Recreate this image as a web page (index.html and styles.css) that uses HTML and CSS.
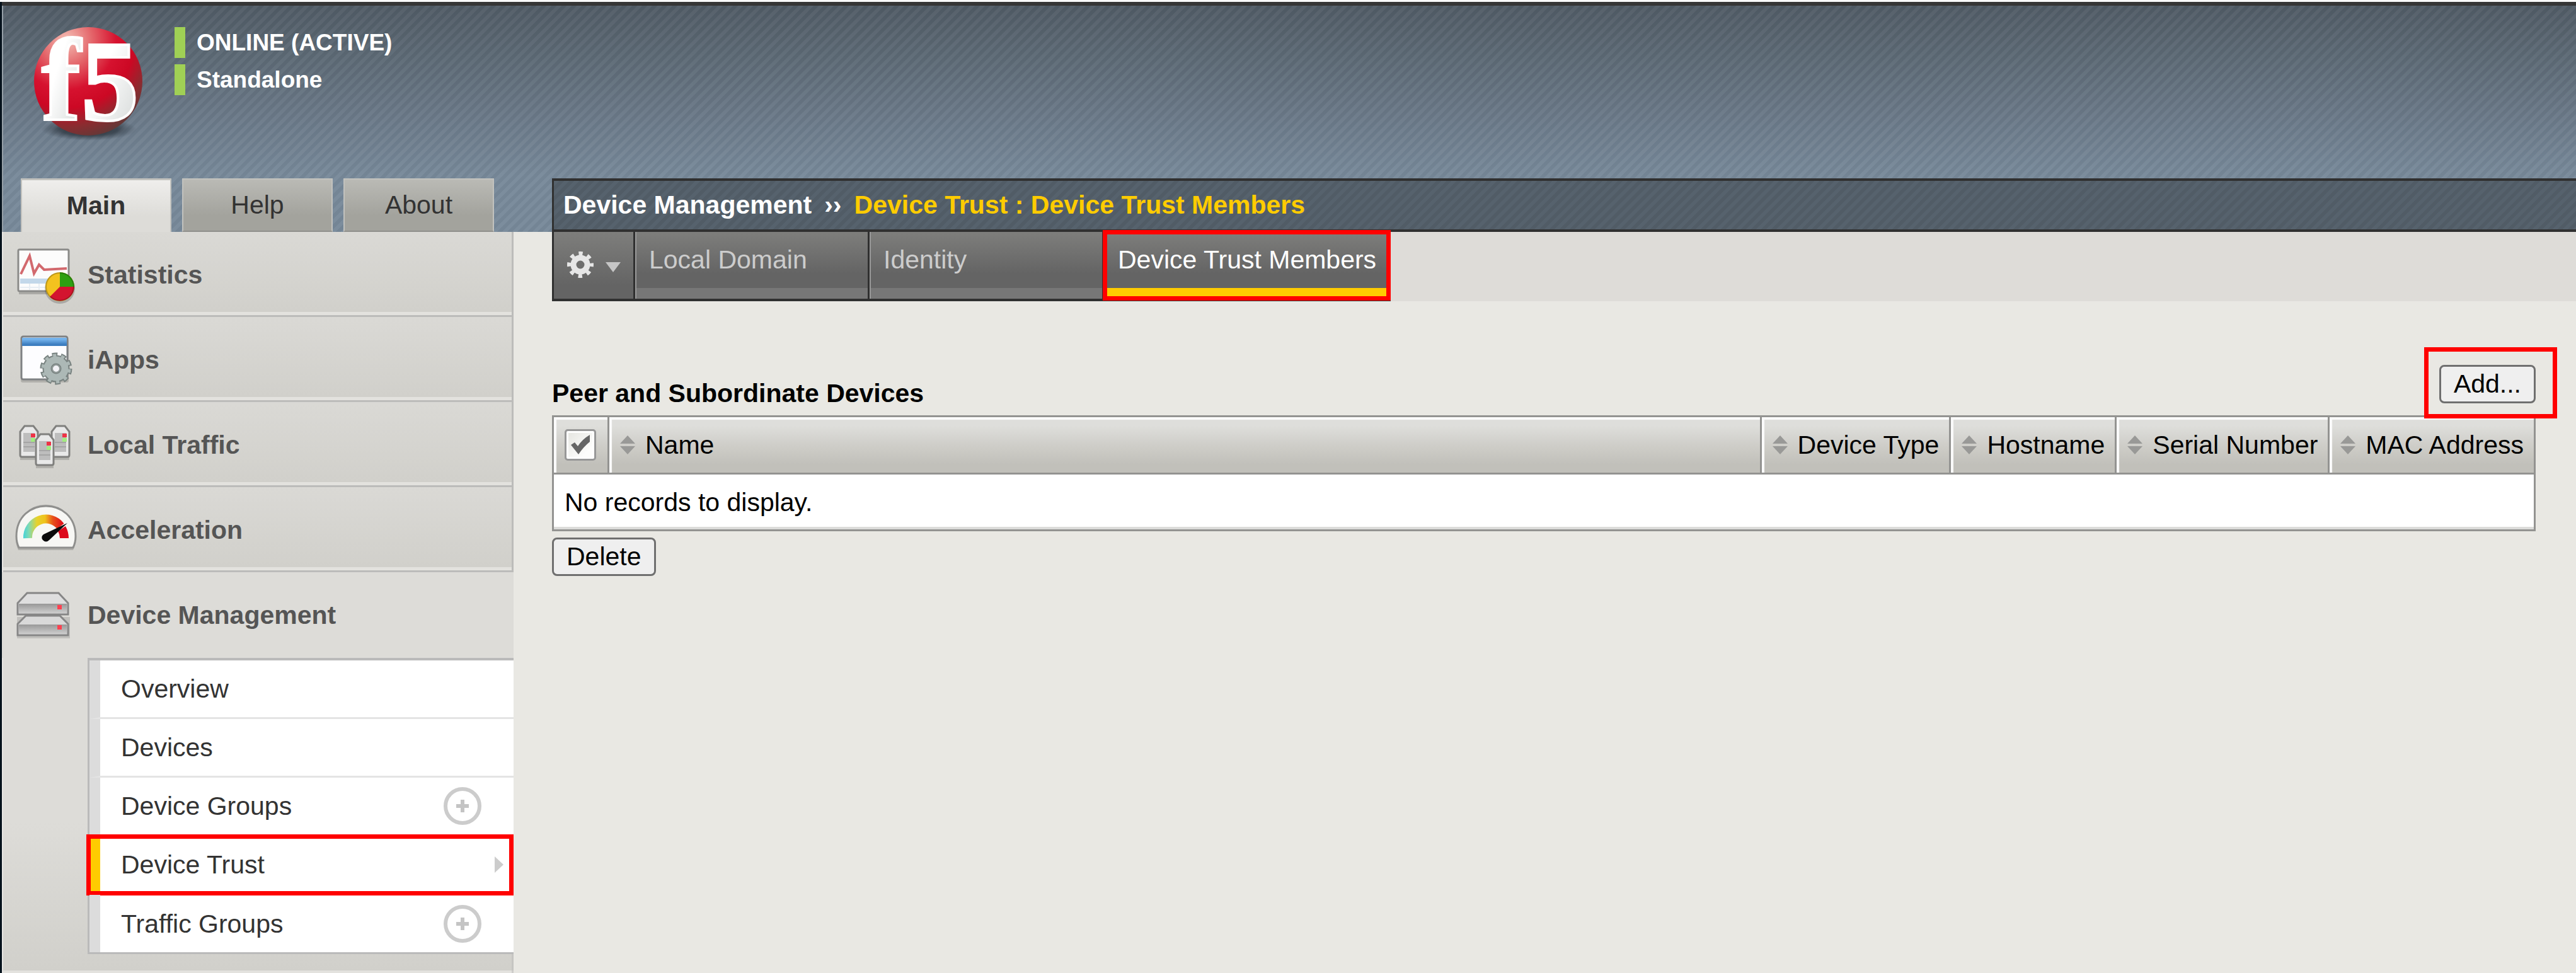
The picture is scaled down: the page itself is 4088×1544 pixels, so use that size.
FILE: index.html
```html
<!DOCTYPE html>
<html lang="en">
<head>
<meta charset="utf-8">
<title>Device Trust Members</title>
<link rel="stylesheet" href="styles.css">
</head>
<body>
<div class="app">
  <header class="header">
    <div class="brand">
      <svg class="logo" viewBox="33 33 210 190" role="img" aria-label="f5">
        <defs>
          <radialGradient id="ball" cx="0.3" cy="0.12" r="0.95">
            <stop offset="0" stop-color="#f4c0b6"/>
            <stop offset="0.25" stop-color="#e4656a"/>
            <stop offset="0.48" stop-color="#d6122f"/>
            <stop offset="0.66" stop-color="#cc0824"/>
            <stop offset="0.84" stop-color="#8a2c30"/>
            <stop offset="1" stop-color="#5c3a38"/>
          </radialGradient>
          <radialGradient id="ballShadow">
            <stop offset="0" stop-color="#1c232a"/>
            <stop offset="0.6" stop-color="#2a333c" stop-opacity="0.7"/>
            <stop offset="1" stop-color="#3a4550" stop-opacity="0"/>
          </radialGradient>
          <linearGradient id="mark" x1="0" y1="0" x2="1" y2="1">
            <stop offset="0.4" stop-color="#ffffff"/>
            <stop offset="1" stop-color="#cfd3d2"/>
          </linearGradient>
        </defs>
        <ellipse cx="141" cy="205" rx="76" ry="18" fill="url(#ballShadow)"/>
        <circle cx="140" cy="129" r="86" fill="url(#ball)"/>
        <g class="logo-mark" fill="url(#mark)" stroke="#ffffff" stroke-width="4">
          <text x="66" y="190" font-size="186">f</text>
          <text x="129" y="190" font-size="182">5</text>
        </g>
      </svg>
      <div class="status">
        <div class="status-line">ONLINE (ACTIVE)</div>
        <div class="status-line">Standalone</div>
      </div>
    </div>
    <div class="header-nav">
      <nav class="side-tabs">
        <a class="side-tab side-tab-active" href="#">Main</a>
        <a class="side-tab" href="#">Help</a>
        <a class="side-tab" href="#">About</a>
      </nav>
      <div class="breadcrumb">
        <span>Device Management</span>
        <span>››</span>
        <span class="crumb-current">Device Trust : Device Trust Members</span>
      </div>
    </div>
  </header>

  <div class="content">
    <aside class="sidebar">
      <a class="module" href="#">
        <svg class="module-icon" viewBox="0 0 136 135" aria-hidden="true">
          <rect x="27" y="32" width="80" height="67" fill="#00000030"/>
          <rect x="26" y="28" width="80" height="66" rx="2" fill="#fcfcfc" stroke="#8b8b89" stroke-width="3"/>
          <path d="M29 74h74v8H29z" fill="#c3d8ea"/>
          <path d="M29 88h74M44 82v10M59 82v10" stroke="#e8eef3" stroke-width="2"/>
          <path d="M30 67 44 38 51 66 59 52 67 60 103 58" fill="none" stroke="#d2696e" stroke-width="4"/>
          <circle cx="92" cy="90" r="24" fill="#00000030"/>
          <circle cx="92" cy="87" r="23" fill="#f3c21f"/>
          <path d="M92 87V64a23 23 0 0 1 23 23z" fill="#2ea012"/>
          <path d="M92 87h23a23 23 0 0 1-39 16z" fill="#d3142f"/>
          <circle cx="92" cy="87" r="22" fill="none" stroke="#00000038" stroke-width="2"/>
        </svg>
        Statistics
      </a>
      <a class="module" href="#">
        <svg class="module-icon" viewBox="0 0 136 135" aria-hidden="true">
          <defs><linearGradient id="title" x1="0" y1="0" x2="0" y2="1"><stop offset="0.2" stop-color="#74b3ec"/><stop offset="0.8" stop-color="#3d7ec0"/></linearGradient></defs>
          <rect x="30" y="35" width="76" height="69" rx="3" fill="#00000028"/>
          <rect x="31" y="31" width="73" height="68" rx="3" fill="#fdfdff" stroke="#7f8183" stroke-width="3"/>
          <path d="M32 33h71v13H32z" fill="url(#title)"/>
          <g fill="none" stroke="#788280">
            <circle cx="86" cy="82" r="21" stroke-width="9" stroke-dasharray="8 5.2"/>
            <circle cx="86" cy="82" r="14" stroke-width="15"/>
          </g>
          <g fill="none" stroke="#acb8b6">
            <circle cx="86" cy="82" r="20" stroke-width="7" stroke-dasharray="5 7.57" stroke-dashoffset="-1"/>
            <circle cx="86" cy="82" r="14" stroke-width="11"/>
          </g>
          <circle cx="86" cy="82" r="6" fill="#f2f2f6" stroke="#8e9896" stroke-width="2"/>
        </svg>
        iApps
      </a>
      <a class="module" href="#">
        <svg class="module-icon" viewBox="0 0 136 135" aria-hidden="true">
          <defs>
            <g id="server">
              <path d="M2 53V11L9 2h14l7 9v42z" transform="translate(0 3)" fill="#00000028"/>
              <path d="M2 48V11L9 2h14l7 9v37q0 3-3 3H5q-3 0-3-3z" fill="#e9e9e9" stroke="#80807e" stroke-width="3"/>
              <path d="M7 13h18v30H7z" fill="#bdbdbd"/>
              <path d="M7 28h18M7 35h18" stroke="#a5a5a5" stroke-width="2"/>
              <path d="M19 14h7v6h-7z" fill="#ee3345"/>
              <path d="M19 21h7v6h-7z" fill="#a3ec80"/>
            </g>
          </defs>
          <use href="#server" x="27" y="36"/>
          <use href="#server" x="77" y="36"/>
          <use href="#server" x="52" y="49"/>
        </svg>
        Local Traffic
      </a>
      <a class="module" href="#">
        <svg class="module-icon" viewBox="0 0 136 135" aria-hidden="true">
          <defs><linearGradient id="dial" gradientUnits="userSpaceOnUse" x1="34" y1="0" x2="106" y2="0"><stop offset="0" stop-color="#45d3d8"/><stop offset="0.12" stop-color="#7fd9b5"/><stop offset="0.3" stop-color="#e6d22c"/><stop offset="0.48" stop-color="#efc21c"/><stop offset="0.65" stop-color="#e8521a"/><stop offset="0.85" stop-color="#e0151c"/></linearGradient></defs>
          <path d="M22 81C22 10 117 10 117 81q0 10-4 19H26q-4-9-4-19z" fill="#00000028"/>
          <path d="M23 78C23 14 117 14 117 78q0 10-4 18H27q-4-8-4-18z" fill="#f7f7f4" stroke="#8f8f8d" stroke-width="3"/>
          <path d="M41 81A29 29 0 0 1 93 62" fill="none" stroke="url(#dial)" stroke-width="14"/>
          <path d="M106 81H92q0-6-3-11l12-8q5 9 5 19z" fill="#dd0a1c"/>
          <path d="M104 57 66 75q-5 4-1 9 5 5 10 0z" fill="#0b0b0b"/>
        </svg>
        Acceleration
      </a>
      <section class="module-open">
        <a class="module-head" href="#">
          <svg class="module-icon" viewBox="0 0 136 135" aria-hidden="true">
            <defs>
              <linearGradient id="rack" x1="0" y1="0" x2="0" y2="1"><stop offset="0" stop-color="#989898"/><stop offset="1" stop-color="#cdcdcd"/></linearGradient>
            </defs>
            <path d="M24 70h84v34H24z" fill="#00000020"/>
            <path d="M38 68h54l13 13v18H25V81z" fill="#d9d9d9" stroke="#868686" stroke-width="3"/>
            <path d="M27 82h76v15H27z" fill="url(#rack)"/>
            <path d="M40 32h50l15 16v18H25V48z" fill="#dedede" stroke="#868686" stroke-width="3"/>
            <path d="M27 49h76v15H27z" fill="url(#rack)"/>
            <path d="M88 51h7v7h-7zM88 83h7v7h-7z" fill="#ff4150"/>
          </svg>
          Device Management
        </a>
        <ul class="submenu">
          <li class="submenu-item"><a href="#">Overview</a></li>
          <li class="submenu-item"><a href="#">Devices</a></li>
          <li class="submenu-item"><a href="#">Device Groups</a>
            <button class="create" type="button" aria-label="Create device group"><svg viewBox="0 0 60 60"><circle cx="30" cy="30" r="27" fill="none" stroke="#cccccc" stroke-width="6"/><path d="M30 20v20M20 30h20" stroke="#c4c4c4" stroke-width="6"/></svg></button></li>
          <li class="submenu-item submenu-current"><a href="#">Device Trust</a>
            <svg class="arrow" viewBox="0 0 14 26" aria-hidden="true"><path d="M0 0 14 13 0 26z" fill="#cccccc"/></svg>
            <span class="callout callout-menu"></span></li>
          <li class="submenu-item"><a href="#">Traffic Groups</a>
            <button class="create" type="button" aria-label="Create traffic group"><svg viewBox="0 0 60 60"><circle cx="30" cy="30" r="27" fill="none" stroke="#cccccc" stroke-width="6"/><path d="M30 20v20M20 30h20" stroke="#c4c4c4" stroke-width="6"/></svg></button></li>
        </ul>
      </section>
    </aside>

    <main class="main">
      <nav class="tabs">
        <button class="tab-menu" type="button" aria-label="Options">
          <svg class="gear" viewBox="0 0 44 44" aria-hidden="true">
            <g fill="none" stroke="#e6e6e6">
              <circle cx="22" cy="22" r="17" stroke-width="8" stroke-dasharray="6 7.35" stroke-dashoffset="3"/>
              <circle cx="22" cy="22" r="11" stroke-width="9"/>
            </g>
          </svg>
          <svg class="caret" viewBox="0 0 24 16" aria-hidden="true"><path d="M0 0h24L12 16z" fill="#c6c6c6"/></svg>
        </button>
        <a class="tab" href="#">Local Domain</a>
        <a class="tab" href="#">Identity</a>
        <a class="tab tab-active" href="#">Device Trust Members<span class="callout callout-tab"></span></a>
      </nav>

      <div class="panel">
        <div class="toolbar">
          <h1 class="title">Peer and Subordinate Devices</h1>
          <div class="toolbar-action">
            <button class="button" type="button">Add...</button>
            <span class="callout callout-add"></span>
          </div>
        </div>
        <table class="grid">
          <thead>
            <tr>
              <th class="check-cell"><label class="check"><input type="checkbox" aria-label="Select all"><svg viewBox="0 0 50 50" aria-hidden="true"><path d="M10 25 16 21 21 27Q28 16 40 9V20Q30 28 22 40z" fill="#666666"/></svg></label></th>
              <th class="name-cell"><span class="sort"><svg viewBox="0 0 24 30" aria-hidden="true"><path d="M12 0 24 13H0zM0 17h24L12 30z" fill="#999997"/></svg>Name</span></th>
              <th><span class="sort"><svg viewBox="0 0 24 30" aria-hidden="true"><path d="M12 0 24 13H0zM0 17h24L12 30z" fill="#999997"/></svg>Device Type</span></th>
              <th><span class="sort"><svg viewBox="0 0 24 30" aria-hidden="true"><path d="M12 0 24 13H0zM0 17h24L12 30z" fill="#999997"/></svg>Hostname</span></th>
              <th><span class="sort"><svg viewBox="0 0 24 30" aria-hidden="true"><path d="M12 0 24 13H0zM0 17h24L12 30z" fill="#999997"/></svg>Serial Number</span></th>
              <th><span class="sort"><svg viewBox="0 0 24 30" aria-hidden="true"><path d="M12 0 24 13H0zM0 17h24L12 30z" fill="#999997"/></svg>MAC Address</span></th>
            </tr>
          </thead>
          <tbody>
            <tr><td colspan="6">No records to display.</td></tr>
          </tbody>
        </table>
        <button class="button" type="button">Delete</button>
      </div>
    </main>
  </div>
</div>
</body>
</html>
```
FILE: styles.css
```css
*,
*::before,
*::after {
  box-sizing: border-box;
}

body {
  margin: 0;
  border-top: 3px solid #fafafa;
  background: #e9e8e3;
  color: #000;
  font: 41px/46px "Liberation Sans", Arial, sans-serif;
}

a {
  color: inherit;
  text-decoration: none;
}

button {
  font: inherit;
}

svg {
  display: block;
}

.app {
  display: flex;
  flex-direction: column;
  min-height: calc(100vh - 3px);
  border-left: 3px solid #06121c;
}

/* Header */

.header {
  display: flex;
  flex-direction: column;
  justify-content: space-between;
  min-height: 365px;
  padding: 24px 0 0 30px;
  border-top: 6px solid #363636;
  background:
    linear-gradient(135deg, #ffffff0a 25%, #00000006 25% 50%, #ffffff0a 50% 75%, #00000006 75%) 0 0 / 16px 16px,
    linear-gradient(#505b65, #778899 75%);
  box-shadow: inset 2px 0 #96a0a8;
}

.brand {
  display: flex;
  gap: 34px;
}

.logo {
  width: 210px;
  height: 190px;
  overflow: visible;
}

.logo-mark {
  font-family: "Liberation Serif", "Times New Roman", serif;
  font-weight: 700;
}

.status {
  display: flex;
  flex-direction: column;
  gap: 10px;
  padding-top: 10px;
}

.status-line {
  padding-left: 18px;
  border-left: 17px solid #a0d055;
  color: #fff;
  font-size: 37px;
  font-weight: 700;
  line-height: 49px;
}

.header-nav {
  display: grid;
  grid-template-columns: 843px 1fr;
  min-height: 85px;
}

.side-tabs {
  display: flex;
  gap: 17px;
}

.side-tab {
  display: flex;
  align-items: center;
  justify-content: center;
  width: 239px;
  padding-bottom: 2px;
  border: 2px solid #c2c2be;
  border-bottom-color: #90908c;
  background: linear-gradient(#babab5, #a3a39d 70%);
  color: #333;
}

.side-tab-active {
  border-top-width: 3px;
  border-bottom: 0;
  background: linear-gradient(#efeeec, #dddcd8 70%);
  font-weight: 700;
}

.breadcrumb {
  display: flex;
  align-items: center;
  gap: 20px;
  padding: 0 0 2px 15px;
  border: solid #303030;
  border-width: 4px 0 4px 3px;
  background: linear-gradient(135deg, #56626d 25%, #515c66 25% 50%, #56626d 50% 75%, #515c66 75%) 0 0 / 16px 16px;
  color: #fff;
  font-weight: 700;
}

.crumb-current {
  color: #fc0;
}

.content {
  display: flex;
  flex: 1;
}

/* Sidebar */

.sidebar {
  display: flex;
  flex: none;
  flex-direction: column;
  width: 812px;
  background: #dddcd8;
  color: #555;
}

.module {
  display: flex;
  align-items: center;
  height: 135px;
  border-right: 3px solid #bcbcba;
  background: linear-gradient(to top, #bcbcba 3px, #e3e2de 3px 8px, #d1d0cb 8px, #dad9d5);
  box-shadow: inset 2px 0 #e8e7e4;
  font-weight: 700;
}

.module-icon {
  flex: none;
  width: 136px;
  height: 135px;
}

.module-open {
  flex: 1;
  padding-bottom: 30px;
  background: linear-gradient(to top, #e3e2de 4px, #d1d0cb 4px, #dddcd8 240px);
  box-shadow: inset 2px 0 #e8e7e4, inset -3px 0 #bcbcba88;
}

.module-head {
  display: flex;
  align-items: center;
  height: 136px;
  background: #dddcd8;
  font-weight: 700;
}

.submenu {
  margin: 0 0 0 136px;
  padding: 0;
  border: solid #bababa;
  border-width: 4px 0 3px 3px;
  background: #fff;
  color: #333;
  list-style: none;
}

.submenu-item {
  position: relative;
  display: flex;
  align-items: center;
  justify-content: space-between;
  height: 93px;
  padding: 0 51px 0 33px;
  border-bottom: 3px solid #e4e4e4;
  border-left: 17px solid #dcdcdc;
}

.submenu-item:last-child {
  height: 91px;
  border-bottom: 0;
}

.submenu-current {
  padding-right: 16px;
  border-left-color: #fc0;
}

.create {
  width: 60px;
  height: 60px;
  padding: 0;
  border: 0;
  background: none;
}

.arrow {
  width: 14px;
  height: 26px;
}

/* Red highlight frames, drawn over the page */

.callout {
  position: absolute;
  border: 7px solid #f00;
  pointer-events: none;
}

.callout-menu {
  inset: -3px 0 -4px -22px;
}

.callout-tab {
  inset: -3px -3px -3px -2px;
}

.callout-add {
  inset: -28px -34px -24px -24px;
}

/* Main area */

.main {
  flex: 1;
  min-width: 0;
}

.tabs {
  display: flex;
  height: 110px;
  margin-left: 61px;
  background: #dedcd8;
}

.tab-menu,
.tab {
  border: solid #303030;
  background: linear-gradient(#7e7e7c, #646464 80%);
}

.tab-menu {
  display: flex;
  align-items: center;
  gap: 18px;
  width: 132px;
  padding: 0 0 2px 20px;
  border-width: 0 3px 4px 3px;
}

.gear {
  width: 44px;
  height: 44px;
}

.caret {
  width: 24px;
  height: 16px;
  margin-top: 8px;
}

.tab {
  position: relative;
  display: flex;
  flex-direction: column;
  min-width: 372px;
  padding: 0 20px 0 22px;
  border-width: 0 3px 4px 0;
  background:
    linear-gradient(#999, #999) 0 0 / 2px 100% no-repeat,
    linear-gradient(to top, #777 17px, #646464 17px 40px, #7e7e7c);
  color: #ccc;
  line-height: 89px;
}

.tab-active {
  background: linear-gradient(to top, #fc0 17px, #646464 17px 40px, #7e7e7c);
  color: #fff;
}

.panel {
  padding: 101px 64px 0 61px;
}

.toolbar {
  display: flex;
  align-items: flex-start;
  justify-content: space-between;
  min-height: 80px;
}

.title {
  margin: 0;
  padding-top: 22px;
  font-size: 41px;
  line-height: 46px;
}

.toolbar-action {
  position: relative;
}

.button {
  display: block;
  height: 61px;
  padding: 0 20px 2px;
  border: 3px solid #6f6f6f;
  border-radius: 8px;
  background: #efefef;
  color: #000;
}

.grid {
  width: 100%;
  margin-bottom: 10px;
  border: 3px solid #939391;
  border-spacing: 0;
  background: #fff;
  white-space: nowrap;
}

.grid th {
  height: 91px;
  padding: 0 16px 0 17px;
  border-right: 3px solid #939391;
  border-bottom: 3px solid #939391;
  background: linear-gradient(#dededb 15%, #cfcec9 50%, #c1c0ba 85%);
  box-shadow: inset 4px 4px 1px #fbfbfb;
  font-weight: 400;
  text-align: left;
}

.grid th:last-child {
  border-right: 0;
}

.grid .check-cell {
  padding-right: 18px;
}

.grid .name-cell {
  width: 100%;
}

.grid td {
  height: 87px;
  padding: 4px 18px 0 17px;
  border-bottom: 4px solid #dcdcda;
}

.sort {
  display: flex;
  align-items: center;
  gap: 16px;
}

.sort svg {
  flex: none;
  width: 24px;
  height: 30px;
}

.check {
  display: grid;
  width: 50px;
}

.check input,
.check svg {
  grid-area: 1 / 1;
  width: 50px;
  height: 50px;
}

.check input {
  margin: 0;
  border: 3px solid #979797;
  border-radius: 5px;
  background: linear-gradient(135deg, #e4e4df, #fdfdfc 75%);
  box-shadow: inset 0 0 0 3px #fff;
  appearance: none;
}

.check svg {
  pointer-events: none;
}
```
